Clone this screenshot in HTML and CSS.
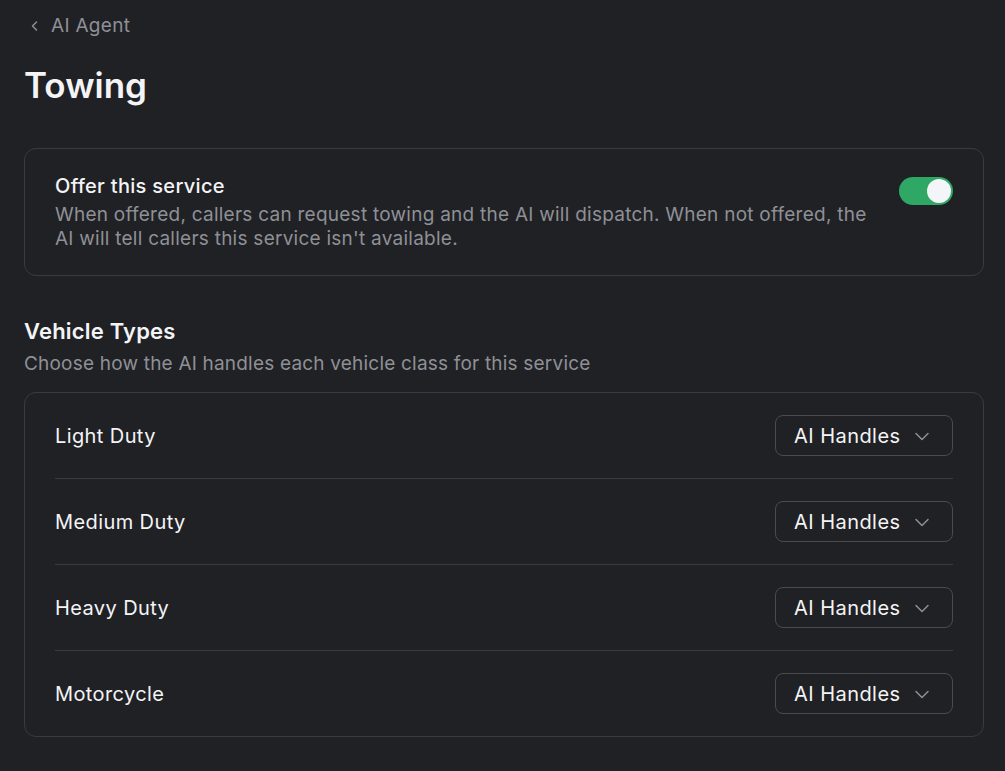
FILE: index.html
```html
<!DOCTYPE html>
<html lang="en">
<head>
<meta charset="utf-8">
<link rel="stylesheet" href="styles.css">
</head>
<body>
<div class="page">
  <a class="back" href="#">
    <svg class="back-icon" width="12" height="14" viewBox="0 0 12 14"><path d="M7.5 3L3.5 7l4 4" fill="none" stroke="currentColor" stroke-width="1.5" stroke-linecap="round" stroke-linejoin="round"/></svg>
    <span>AI Agent</span>
  </a>
  <h1 class="title">Towing</h1>

  <div class="card offer">
    <div class="offer-text">
      <div class="offer-title">Offer this service</div>
      <div class="offer-desc">When offered, callers can request towing and the AI will dispatch. When not offered, the AI will tell callers this service isn't available.</div>
    </div>
    <div class="toggle"><div class="knob"></div></div>
  </div>

  <h2 class="section-title">Vehicle Types</h2>
  <p class="section-sub">Choose how the AI handles each vehicle class for this service</p>

  <div class="card list">
    <div class="row">
      <span class="row-label">Light Duty</span>
      <div class="select"><span>AI Handles</span><svg width="16" height="16" viewBox="0 0 16 16"><path d="M2 5.5l6 6 6-6" fill="none" stroke="currentColor" stroke-width="1.5" stroke-linecap="round" stroke-linejoin="round"/></svg></div>
    </div>
    <div class="row">
      <span class="row-label">Medium Duty</span>
      <div class="select"><span>AI Handles</span><svg width="16" height="16" viewBox="0 0 16 16"><path d="M2 5.5l6 6 6-6" fill="none" stroke="currentColor" stroke-width="1.5" stroke-linecap="round" stroke-linejoin="round"/></svg></div>
    </div>
    <div class="row">
      <span class="row-label">Heavy Duty</span>
      <div class="select"><span>AI Handles</span><svg width="16" height="16" viewBox="0 0 16 16"><path d="M2 5.5l6 6 6-6" fill="none" stroke="currentColor" stroke-width="1.5" stroke-linecap="round" stroke-linejoin="round"/></svg></div>
    </div>
    <div class="row">
      <span class="row-label">Motorcycle</span>
      <div class="select"><span>AI Handles</span><svg width="16" height="16" viewBox="0 0 16 16"><path d="M2 5.5l6 6 6-6" fill="none" stroke="currentColor" stroke-width="1.5" stroke-linecap="round" stroke-linejoin="round"/></svg></div>
    </div>
  </div>
</div>
</body>
</html>
```
FILE: styles.css
```css
* { box-sizing: border-box; }
html, body { margin: 0; padding: 0; background: #202125; }
body {
  font-family: Inter, "Noto Sans", sans-serif;
  color: #f4f4f6;
  height: 771px;
  overflow: hidden;
}
.page { padding: 13px 21px 0 24px; }
.back {
  display: flex;
  align-items: center;
  gap: 10px;
  color: #8f9096;
  text-decoration: none;
  font-size: 19px;
  letter-spacing: 0.3px;
  line-height: 26px;
  padding-left: 5px;
}
.back-icon { flex: none; }
.title {
  margin: 25px 0 0 0;
  font-size: 35px;
  line-height: 42px;
  font-weight: 600;
  letter-spacing: 0;
}
.card {
  border: 1px solid #3a3b40;
  border-radius: 12px;
}
.offer {
  margin-top: 42px;
  display: flex;
  align-items: flex-start;
  justify-content: space-between;
  padding: 24px 30px 24px 30px;
}
.offer-text { max-width: 820px; }
.offer-title {
  font-size: 20px;
  line-height: 26px;
  font-weight: 500;
  letter-spacing: 0.3px;
}
.offer-desc {
  font-size: 19px;
  line-height: 24px;
  color: #8f9096;
  margin-top: 4px;
  letter-spacing: 0.25px;
}
.toggle {
  flex: none;
  width: 54px;
  height: 28px;
  border-radius: 14px;
  background: #2fa866;
  margin-top: 4px;
  display: flex;
  align-items: center;
  justify-content: flex-end;
  padding: 2px;
}
.knob {
  width: 24px;
  height: 24px;
  border-radius: 50%;
  background: #f4f5f9;
}
.section-title {
  margin: 41px 0 0 0;
  font-size: 22px;
  line-height: 28px;
  font-weight: 600;
  letter-spacing: 0.2px;
}
.section-sub {
  margin: 6px 0 0 0;
  font-size: 19px;
  line-height: 26px;
  color: #8f9096;
  letter-spacing: 0.2px;
}
.list {
  margin-top: 15px;
  padding: 0 30px;
}
.row {
  display: flex;
  align-items: center;
  justify-content: space-between;
  padding: 22px 0;
  border-top: 1px solid #3a3b40;
}
.row:first-child { border-top: none; }
.row-label {
  font-size: 20px;
  font-weight: 400;
  letter-spacing: 0.4px;
}
.select {
  width: 178px;
  height: 41px;
  border: 1px solid #4a4b50;
  border-radius: 8px;
  display: flex;
  align-items: center;
  justify-content: space-between;
  padding: 0 22px 0 18px;
  font-size: 20px;
  font-weight: 400;
  letter-spacing: 0.45px;
  color: #f4f4f6;
}
.select svg { color: #8f9096; }
```
